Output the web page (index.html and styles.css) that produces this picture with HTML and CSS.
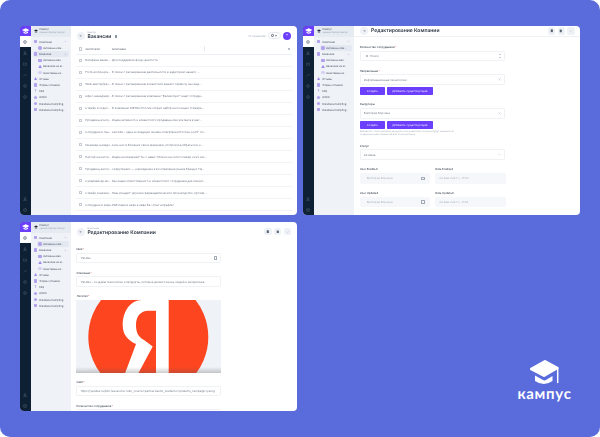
FILE: index.html
```html
<!DOCTYPE html>
<html lang="ru">
<head>
<meta charset="utf-8">
<title>Кампус</title>
<link rel="stylesheet" href="styles.css">
</head>
<body>
<svg class="defs" aria-hidden="true">
  <symbol id="i-globe" viewBox="0 0 10 10"><circle cx="5" cy="5" r="3.8" fill="none" stroke="currentColor"/><path d="M1.2 5h7.6M5 1.2c-2.4 2.4-2.4 5.2 0 7.6M5 1.2c2.4 2.4 2.4 5.2 0 7.6" fill="none" stroke="currentColor" stroke-width=".7"/></symbol>
  <symbol id="i-user" viewBox="0 0 10 10"><circle cx="5" cy="3.4" r="2" fill="none" stroke="currentColor"/><path d="M1.5 9c0-4 7-4 7 0z" fill="none" stroke="currentColor"/></symbol>
  <symbol id="i-folder" viewBox="0 0 10 10"><path d="M1 2.2h3l1 1.2h4v4.6H1z" fill="none" stroke="currentColor"/></symbol>
  <symbol id="i-chart" viewBox="0 0 10 10"><path d="M1 8l3-3 2 1.5L9 2" fill="none" stroke="currentColor"/></symbol>
  <symbol id="i-gear" viewBox="0 0 10 10"><circle cx="5" cy="5" r="3.6" fill="none" stroke="currentColor"/><circle cx="5" cy="5" r="1.2" fill="currentColor"/></symbol>
  <symbol id="i-box" viewBox="0 0 10 10"><rect x="1.5" y="1.5" width="7" height="7" rx="1.5" fill="none" stroke="currentColor"/><path d="M1.5 5h7" stroke="currentColor"/></symbol>
  <symbol id="i-back" viewBox="0 0 10 10"><path d="M7.5 5h-5M4.5 3L2.5 5l2 2" fill="none" stroke="currentColor"/></symbol>
  <symbol id="i-chev" viewBox="0 0 10 10"><path d="M2 3.5L5 6.5l3-3" fill="none" stroke="currentColor"/></symbol>
  <symbol id="i-x" viewBox="0 0 10 10"><path d="M2 2l6 6M8 2l-6 6" stroke="currentColor" stroke-width="1.6"/></symbol>
  <symbol id="i-cap" viewBox="0 0 10 10"><path d="M5 1.5L10 4 5 6.5 0 4zM2 6v2l3 1 3-1V6L5 7.5z" fill="currentColor"/></symbol>
  <symbol id="i-check" viewBox="0 0 10 10"><path d="M2 5.2l2 2 4-4.4" fill="none" stroke="currentColor"/></symbol>
  <symbol id="i-trash" viewBox="0 0 10 10"><path d="M2.5 2.5h5V9h-5zM1.5 2h7M4 1h2" fill="currentColor" stroke="currentColor" stroke-width=".7"/></symbol>
  <symbol id="i-copy" viewBox="0 0 10 10"><rect x="2" y="1" width="6" height="8" rx="1" fill="currentColor"/></symbol>
</svg>

<main class="desk">

  <!-- Окно 1: список вакансий -->
  <section class="window">
    <div class="rail">
      <div class="rail-logo"><svg class="rail-logo-svg" viewBox="0 0 10 10"><use href="#i-cap"/></svg></div>
      <div class="rail-item rail-active"><svg class="rail-ico"><use href="#i-globe"/></svg></div>
      <div class="rail-item"><svg class="rail-ico"><use href="#i-user"/></svg></div>
      <div class="rail-item"><svg class="rail-ico"><use href="#i-folder"/></svg></div>
      <div class="rail-item"><svg class="rail-ico"><use href="#i-chart"/></svg></div>
      <div class="rail-item"><svg class="rail-ico"><use href="#i-gear"/></svg></div>
      <div class="rail-item"><svg class="rail-ico"><use href="#i-gear"/></svg></div>
      <div class="rail-item rail-push"><svg class="rail-ico"><use href="#i-user"/></svg></div>
      <div class="rail-item"><svg class="rail-ico"><use href="#i-box"/></svg></div>
    </div>
    <aside class="nav">
      <div class="nav-head"><svg class="nav-head-ico"><use href="#i-cap"/></svg><div><div class="nav-head-title">Кампус</div><div class="nav-head-sub">Администратор Кампус</div></div></div>
      <div class="nav-list">
        <div class="nav-item"><i class="dot sq"></i><span>Компании</span><svg class="nav-chev"><use href="#i-chev"/></svg></div>
        <div class="nav-item child"><i class="dot round"></i><span>Активные ком...</span></div>
        <div class="nav-item selected"><i class="dot sq"></i><span>Вакансии</span><svg class="nav-chev"><use href="#i-chev"/></svg></div>
        <div class="nav-item child"><i class="dot sq"></i><span>Активные вак...</span></div>
        <div class="nav-item child"><i class="dot tri"></i><span>Вакансии на м...</span></div>
        <div class="nav-item child"><i class="dot round pale"></i><span>Неактивные в...</span></div>
        <div class="nav-item"><i class="dot tri"></i><span>Отзывы</span></div>
        <div class="nav-item"><i class="dot sq"></i><span>Формы отзывов</span></div>
        <div class="nav-item"><b class="dot-q">?</b><span>FAQ</span></div>
        <div class="nav-item"><i class="dot round"></i><span>Admin</span></div>
        <div class="nav-item"><i class="dot round"></i><span>Database Kampfing</span></div>
        <div class="nav-item"><i class="dot sq"></i><span>Database Kampfing...</span></div>
      </div>
    </aside>
    <div class="main">
      <header class="head">
        <span class="round-btn"><svg class="btn-ico"><use href="#i-back"/></svg></span>
        <div class="head-text"><div class="crumb">Кампус</div><h1 class="title">Вакансии</h1></div>
        <span class="bookmark"></span>
        <span class="count">27 элементов</span>
        <span class="pill"><i class="pill-search"></i><i class="pill-filter"></i></span>
        <span class="plus">+</span>
      </header>
      <div class="table">
        <div class="row row-head"><i class="check"></i><span class="c-name">Заголовок</span><span class="c-desc">Описание</span><i class="col-sep"></i><i class="col-tool"></i></div>
        <div class="row"><i class="check"></i><span class="c-name">Ветераны вакан...</span><span class="c-desc">Для поддержки фонд занятости</span></div>
        <div class="row"><i class="check"></i><span class="c-name">Front-end разра...</span><span class="c-desc">В связи с расширением деятельности в аудиторию нашего ...</span></div>
        <div class="row"><i class="check"></i><span class="c-name">Web-мастер/раз...</span><span class="c-desc">В связи с расширением клиентской вашего сервиса, мы ище...</span></div>
        <div class="row"><i class="check"></i><span class="c-name">Офис-менеджер...</span><span class="c-desc">В связи с расширением компании "Великолукс" ищет сотрудн...</span></div>
        <div class="row"><i class="check"></i><span class="c-name">Стажёр в отдел ...</span><span class="c-desc">В компанию METRO Россия открыт набор на позицию стажера ...</span></div>
        <div class="row"><i class="check"></i><span class="c-name">Продавец-консу...</span><span class="c-desc">Ищем активного и клиентского продавца-консультанта в маг...</span></div>
        <div class="row"><i class="check"></i><span class="c-name">Сотрудник в пун...</span><span class="c-desc">Lamoda – одна из ведущих онлайн-платформ в России и СНГ по...</span></div>
        <div class="row"><i class="check"></i><span class="c-name">Инженер-наладч...</span><span class="c-desc">Сеть нас в ближних связи механики, которой разобраться в н...</span></div>
        <div class="row"><i class="check"></i><span class="c-name">Кассир на кассе...</span><span class="c-desc">Ищем на пекарней! Ты с нами? Можно на сети! Стажер 2023 ать...</span></div>
        <div class="row"><i class="check"></i><span class="c-name">Продавец-касси...</span><span class="c-desc">«Скрупнеки» — учреждение в возглавлении рынка бренд в ТЦ...</span></div>
        <div class="row"><i class="check"></i><span class="c-name">Супервайзер мо...</span><span class="c-desc">Мы ищем ответственного и клиентского сотрудника для клиент...</span></div>
        <div class="row"><i class="check"></i><span class="c-name">Стажёр в межка...</span><span class="c-desc">Наш концерт: крупное фармацевтическое производство, против...</span></div>
        <div class="row"><i class="check"></i><span class="c-name">Сотрудник в кафе...</span><span class="c-desc">Работаем в кафе в кафе без опыт штрафов!</span></div>
      </div>
    </div>
  </section>

  <!-- Окно 2: редактирование компании -->
  <section class="window">
    <div class="rail">
      <div class="rail-logo"><svg class="rail-logo-svg" viewBox="0 0 10 10"><use href="#i-cap"/></svg></div>
      <div class="rail-item rail-active"><svg class="rail-ico"><use href="#i-globe"/></svg></div>
      <div class="rail-item"><svg class="rail-ico"><use href="#i-user"/></svg></div>
      <div class="rail-item"><svg class="rail-ico"><use href="#i-folder"/></svg></div>
      <div class="rail-item"><svg class="rail-ico"><use href="#i-chart"/></svg></div>
      <div class="rail-item"><svg class="rail-ico"><use href="#i-gear"/></svg></div>
      <div class="rail-item"><svg class="rail-ico"><use href="#i-gear"/></svg></div>
      <div class="rail-item rail-push"><svg class="rail-ico"><use href="#i-user"/></svg></div>
      <div class="rail-item"><svg class="rail-ico"><use href="#i-box"/></svg></div>
    </div>
    <aside class="nav">
      <div class="nav-head"><svg class="nav-head-ico"><use href="#i-cap"/></svg><div><div class="nav-head-title">Кампус</div><div class="nav-head-sub">Администратор Кампус</div></div></div>
      <div class="nav-list">
        <div class="nav-item"><i class="dot sq"></i><span>Компании</span><svg class="nav-chev"><use href="#i-chev"/></svg></div>
        <div class="nav-item child selected-child"><i class="dot round"></i><span>Активные ком...</span></div>
        <div class="nav-item"><i class="dot sq"></i><span>Вакансии</span><svg class="nav-chev"><use href="#i-chev"/></svg></div>
        <div class="nav-item child"><i class="dot sq"></i><span>Активные вак...</span></div>
        <div class="nav-item child"><i class="dot tri"></i><span>Вакансии на м...</span></div>
        <div class="nav-item child"><i class="dot round pale"></i><span>Неактивные в...</span></div>
        <div class="nav-item"><i class="dot tri"></i><span>Отзывы</span></div>
        <div class="nav-item"><i class="dot sq"></i><span>Формы отзывов</span></div>
        <div class="nav-item"><b class="dot-q">?</b><span>FAQ</span></div>
        <div class="nav-item"><i class="dot round"></i><span>Admin</span></div>
        <div class="nav-item"><i class="dot round"></i><span>Database Kampfing</span></div>
        <div class="nav-item"><i class="dot sq"></i><span>Database Kampfing...</span></div>
      </div>
    </aside>
    <div class="main">
      <header class="head head-flat">
        <span class="round-btn"><svg class="btn-ico"><use href="#i-back"/></svg></span>
        <h1 class="title">Редактирование Компании</h1>
        <span class="tools">
          <span class="tool"><svg class="btn-ico dark"><use href="#i-copy"/></svg></span>
          <span class="tool"><svg class="btn-ico dark"><use href="#i-trash"/></svg></span>
          <span class="tool tool-pale"><svg class="btn-ico"><use href="#i-check"/></svg></span>
        </span>
      </header>
      <div class="form form-flat">
        <div class="field"><label class="label">Количество сотрудников<em>*</em></label><div class="input"><i class="input-lead"></i><span>15000</span><i class="spin"></i></div></div>
        <div class="field field-tight"><label class="label">Направление<em>*</em></label><div class="input"><span>Информационные технологии</span><svg class="input-x"><use href="#i-x"/></svg></div></div>
        <div class="actions"><span class="btn btn-s">Создать</span><span class="btn btn-l">Добавить существующий</span></div>
        <div class="field field-tight"><label class="label">Рекрутёры</label><div class="input"><span>Виктория Борзина</span><svg class="input-x"><use href="#i-x"/></svg></div></div>
        <div class="actions"><span class="btn btn-s">Создать</span><span class="btn btn-l">Добавить существующий</span></div>
        <p class="help">Добавьте к этой компании аккаунты пользователей, которые будут заниматься<br>созданием новых вакансий для этой компании.</p>
        <div class="field"><label class="label">Статус</label><div class="input"><span>Активна</span><svg class="input-chev"><use href="#i-chev"/></svg></div></div>
        <div class="pair">
          <div class="field"><label class="label">User Enabled</label><div class="input input-off"><span class="off-user">Виктория Борзина</span><i class="cal"></i></div></div>
          <div class="field"><label class="label">Date Enabled</label><div class="input input-off"><span>24 мая 2023 г., 17:58</span></div></div>
        </div>
        <div class="pair">
          <div class="field"><label class="label">User Updated</label><div class="input input-off"><span class="off-user">Виктория Борзина</span><i class="cal"></i></div></div>
          <div class="field"><label class="label">Date Updated</label><div class="input input-off"><span>24 мая 2023 г., 11:58</span></div></div>
        </div>
      </div>
    </div>
  </section>

  <!-- Окно 3: редактирование компании, логотип -->
  <section class="window">
    <div class="rail">
      <div class="rail-logo"><svg class="rail-logo-svg" viewBox="0 0 10 10"><use href="#i-cap"/></svg></div>
      <div class="rail-item rail-active"><svg class="rail-ico"><use href="#i-globe"/></svg></div>
      <div class="rail-item"><svg class="rail-ico"><use href="#i-user"/></svg></div>
      <div class="rail-item"><svg class="rail-ico"><use href="#i-folder"/></svg></div>
      <div class="rail-item"><svg class="rail-ico"><use href="#i-chart"/></svg></div>
      <div class="rail-item"><svg class="rail-ico"><use href="#i-gear"/></svg></div>
      <div class="rail-item"><svg class="rail-ico"><use href="#i-gear"/></svg></div>
      <div class="rail-item rail-push"><svg class="rail-ico"><use href="#i-user"/></svg></div>
      <div class="rail-item"><svg class="rail-ico"><use href="#i-box"/></svg></div>
    </div>
    <aside class="nav">
      <div class="nav-head"><svg class="nav-head-ico"><use href="#i-cap"/></svg><div><div class="nav-head-title">Кампус</div><div class="nav-head-sub">Администратор Кампус</div></div></div>
      <div class="nav-list">
        <div class="nav-item"><i class="dot sq"></i><span>Компании</span><svg class="nav-chev"><use href="#i-chev"/></svg></div>
        <div class="nav-item child selected-child"><i class="dot round"></i><span>Активные ком...</span></div>
        <div class="nav-item"><i class="dot sq"></i><span>Вакансии</span><svg class="nav-chev"><use href="#i-chev"/></svg></div>
        <div class="nav-item child"><i class="dot sq"></i><span>Активные вак...</span></div>
        <div class="nav-item child"><i class="dot tri"></i><span>Вакансии на м...</span></div>
        <div class="nav-item child"><i class="dot round pale"></i><span>Неактивные в...</span></div>
        <div class="nav-item"><i class="dot tri"></i><span>Отзывы</span></div>
        <div class="nav-item"><i class="dot sq"></i><span>Формы отзывов</span></div>
        <div class="nav-item"><b class="dot-q">?</b><span>FAQ</span></div>
        <div class="nav-item"><i class="dot round"></i><span>Admin</span></div>
        <div class="nav-item"><i class="dot round"></i><span>Database Kampfing</span></div>
        <div class="nav-item"><i class="dot sq"></i><span>Database Kampfing...</span></div>
      </div>
    </aside>
    <div class="main">
      <header class="head">
        <span class="round-btn"><svg class="btn-ico"><use href="#i-back"/></svg></span>
        <div class="head-text"><div class="crumb">Компании</div><h1 class="title">Редактирование Компании</h1></div>
        <span class="tools">
          <span class="tool"><svg class="btn-ico dark"><use href="#i-copy"/></svg></span>
          <span class="tool"><svg class="btn-ico dark"><use href="#i-trash"/></svg></span>
          <span class="tool tool-pale"><svg class="btn-ico"><use href="#i-check"/></svg></span>
        </span>
      </header>
      <div class="form form-logo">
        <div class="field"><label class="label">Имя<em>*</em></label><div class="input"><span>Yandex</span><i class="cal cal-end"></i></div></div>
        <div class="field"><label class="label">Описание<em>*</em></label><div class="input"><span>Yandex – создаём технологии и продукты, которые делают жизнь людей и интереснее.</span></div></div>
        <div class="field field-logo"><label class="label">Логотип<em>*</em></label>
          <div class="logo-box">
            <svg class="logo-art" viewBox="0 0 144.5 73.4" aria-hidden="true">
              <circle cx="72.3" cy="37" r="60" fill="#fd4520"/>
              <path d="M92.7 0H66C54 0 46.7 12 46.7 25C46.7 34 51 40 60 44L49 73.4H62.3L76.7 46.4L68 40C62 37 60 32 60 25C60 16 65 10.7 72 10.7H80V73.4H92.7Z" fill="#fff"/>
            </svg>
            <div class="logo-cap">img 1280</div>
          </div>
        </div>
        <div class="field"><label class="label">Сайт<em>*</em></label><div class="input"><span>https://yandex.ru/jobs/vacancies?utm_source=partners&amp;utm_medium=cpm&amp;utm_campaign=yaorg</span></div></div>
        <div class="field"><label class="label">Количество сотрудников<em>*</em></label><div class="input"></div></div>
      </div>
    </div>
  </section>

  <!-- Логотип Кампус -->
  <div class="brand">
    <svg class="brand-cap" viewBox="0 0 30 26" aria-hidden="true">
      <path d="M1.5 9L15 1.5L27 8L14 15.5Z" fill="#fff" stroke="#fff" stroke-width="3" stroke-linejoin="round"/>
      <path d="M27.7 8V22.5" stroke="#fff" stroke-width="1.5" stroke-linecap="round"/>
      <path d="M5 15.5L13 20Q14.5 20.8 16 20L22.5 16V21Q14 27 5 21Z" fill="#fff"/>
    </svg>
    <div class="brand-name">кампус</div>
  </div>
</main>
</body>
</html>
```

FILE: styles.css
```css
* { box-sizing: border-box; margin: 0; padding: 0; }
html, body { width: 600px; height: 437px; overflow: hidden; background: #fff; }
body { font-family: "Inter", "Liberation Sans", sans-serif; text-rendering: geometricPrecision; }
.defs { width: 0; height: 0; display: block; }

.desk {
  width: 600px;
  height: 437px;
  background: #5a6bdc;
  border-radius: 10px;
  padding: 26px 20px;
  display: grid;
  grid-template-columns: 277px 277px;
  grid-template-rows: 189px 189px;
  column-gap: 6px;
  row-gap: 7px;
}

.window {
  display: flex;
  background: #fff;
  border-radius: 4px;
  overflow: hidden;
  filter: blur(.3px);
  color: #3c4555;
  font-size: 2.9px;
}

/* Rail */
.rail {
  width: 10.7px;
  flex: none;
  background: #0e2033;
  display: flex;
  flex-direction: column;
}
.rail-logo { height: 10px; background: #6b3ffb; color: #fff; display: flex; align-items: center; justify-content: center; }
.rail-logo-svg { width: 7.5px; height: 7.5px; }
.rail-item { height: 11px; flex: none; display: flex; align-items: center; justify-content: center; color: #5d6d7e; }
.rail-active { background: #fff; color: #55606e; }
.rail-push { margin-top: auto; }
.rail-ico { width: 4px; height: 4px; }

/* Nav */
.nav { width: 40.3px; flex: none; background: #eff2f7; }
.nav-head { height: 10.7px; background: #e6ebf2; display: flex; align-items: center; gap: 1.5px; padding-left: 3px; }
.nav-head-ico { width: 4px; height: 4px; color: #1b2533; flex: none; }
.nav-head-title { font-size: 2.7px; line-height: 3.3px; color: #4a5362; }
.nav-head-sub { font-size: 2.2px; line-height: 3px; color: #9aa3b1; white-space: nowrap; }
.nav-list { padding-top: 1.9px; }
.nav-item {
  height: 6.2px;
  display: flex;
  align-items: center;
  gap: 2px;
  padding-left: 3.2px;
  margin-right: 2.3px;
  font-size: 2.6px;
  color: #4c5565;
  white-space: nowrap;
  border-radius: 1.5px;
}
.nav-item.child { padding-left: 7.7px; gap: 1.4px; }
.selected { margin-left: 2.2px; padding-left: 1px; background: #e3e8f1; }
.selected-child { margin-left: 6.3px; padding-left: 1.4px !important; background: #e3e8f1; }
.nav-chev { width: 3px; height: 3px; margin-left: auto; margin-right: 1.5px; color: #8b7ce0; }
.dot { width: 3.4px; height: 3.4px; flex: none; background: #b3a3ee; display: block; }
.sq { border-radius: .8px; }
.round { border-radius: 50%; }
.pale { background: #d7d0f4; }
.tri { clip-path: polygon(50% 0, 100% 100%, 0 100%); background: #9c86ec; }
.dot-q { width: 3.4px; flex: none; text-align: center; font-size: 3.6px; font-weight: 500; color: #8d76e8; }

/* Main */
.main { flex: 1; min-width: 0; display: flex; flex-direction: column; overflow: hidden; }
.head { height: 18px; flex: none; display: flex; align-items: center; padding: 1px 6px 0; gap: 2.4px; }
.head-flat { height: 11px; padding: 0 5.5px 0 6.5px; border-bottom: .6px solid #eef0f4; gap: 2.6px; }
.round-btn { width: 8px; height: 8px; flex: none; border-radius: 50%; background: #eef1f6; display: flex; align-items: center; justify-content: center; color: #3a4454; }
.btn-ico { width: 3.6px; height: 3.6px; display: block; }
.btn-ico.dark { color: #5b6472; }
.crumb { font-size: 2.4px; line-height: 3px; color: #9aa3b1; }
.title { font-size: 5px; line-height: 6px; font-weight: 600; color: #2a3342; white-space: nowrap; }
.bookmark { width: 2.6px; height: 3px; border: .5px solid #8d95a3; margin-left: 1px; margin-top: 2px; }
.count { margin-left: auto; font-size: 2.6px; color: #a5adba; white-space: nowrap; }
.pill { width: 12.5px; height: 7px; border: .5px solid #e6e9ef; border-radius: 3.5px; display: flex; align-items: center; justify-content: center; gap: 1.4px; }
.pill-search { width: 2.6px; height: 2.6px; border: .6px solid #59606e; border-radius: 50%; }
.pill-filter { width: 0; height: 0; border: 1.3px solid transparent; border-top: 2px solid #7d8492; border-bottom: 0; }
.plus { width: 8px; height: 8px; border-radius: 50%; background: #6b3ffb; color: #dcd3ff; font-size: 4.5px; line-height: 8px; text-align: center; }
.tools { margin-left: auto; display: flex; gap: 2.2px; }
.tool { width: 7.4px; height: 7.4px; border-radius: 2.6px; background: #eef1f6; display: flex; align-items: center; justify-content: center; }
.tool-pale { color: #a9b2c4; }

/* Table */
.table { margin: 0 5.5px; }
.row {
  height: 12.05px;
  display: flex;
  align-items: center;
  border-bottom: .5px solid #f1f3f6;
  white-space: nowrap;
  color: #6d7584;
}
.row-head { height: 10.7px; color: #4c5565; border-bottom-color: #eceff3; }
.check { width: 3.4px; height: 3.4px; flex: none; margin-left: 2.5px; border: .6px solid #c4cad4; border-radius: .6px; }
.c-name { width: 29.6px; padding-left: 2.9px; flex: none; overflow: hidden; }
.c-desc { width: 96px; flex: none; overflow: hidden; }
.col-sep { width: .5px; height: 5px; background: #e6e9ef; margin-left: -4px; }
.col-tool { width: 2px; height: 2px; background: #b7bdc9; margin-left: auto; margin-right: 1.5px; }

/* Forms */
.form { padding: 8px 0 0 5.7px; width: 151.5px; }
.form-logo { padding-top: 7px; padding-left: 5.5px; width: 150px; }
.field { margin-bottom: 7.3px; }
.field-tight { margin-bottom: 2px; }
.field-logo { margin-bottom: 7px; }
.label { display: block; height: 4px; line-height: 4px; margin-bottom: 1.7px; font-size: 2.8px; font-weight: 500; color: #3c4555; }
.label em { color: #e0604f; font-style: normal; }
.input {
  height: 10.7px;
  border: .6px solid #eff1f5;
  border-radius: 1.4px;
  display: flex;
  align-items: center;
  padding: 0 3.2px;
  color: #6f7785;
  white-space: nowrap;
  overflow: hidden;
  gap: 1.6px;
}
.input-off { background: #f5f7fa; color: #a9b1be; border-color: #f5f7fa; }
.off-user { padding-left: 2.8px; }
.input-lead { width: 2.6px; height: 2.6px; border: .5px solid #b9bfca; margin-left: 2px; }
.spin { width: 2px; height: 4px; margin-left: auto; border-top: .6px solid #c4cad4; border-bottom: .6px solid #c4cad4; }
.input-x { width: 3px; height: 3px; margin-left: auto; color: #a9b5d0; }
.input-chev { width: 3px; height: 3px; margin-left: auto; color: #8d95a3; }
.cal { width: 3.2px; height: 3.2px; margin-left: auto; margin-right: 1.4px; border: .5px solid #a2a9b6; border-radius: .5px; }
.cal-end { margin-right: 0; }
.actions { display: flex; gap: 1.8px; margin-bottom: 7.2px; }
.btn { height: 8.2px; line-height: 8.2px; text-align: center; background: #6b3ffb; color: #eae5ff; font-size: 2.8px; border-radius: .8px; white-space: nowrap; }
.btn-s { width: 25.4px; }
.btn-l { width: 46px; }
.help { font-size: 2.4px; line-height: 3.6px; color: #a5adba; margin-top: -6.4px; margin-bottom: 6.6px; white-space: nowrap; }
.pair { display: grid; grid-template-columns: 70.5px 70.5px; column-gap: 5px; }

/* Logo upload */
.logo-box { height: 73.4px; background: #eff2f7; position: relative; overflow: hidden; margin-top: -.4px; }
.logo-art { display: block; width: 144.5px; height: 73.4px; }
.logo-cap { position: absolute; left: 0; right: 0; bottom: 0; height: 6.4px; line-height: 6.4px; padding-left: 2px; font-size: 2.4px; color: #e8e8e8; background: linear-gradient(rgba(90, 90, 90, 0), rgba(90, 90, 90, .3)); }

/* Brand */
.brand { justify-self: end; align-self: end; margin: 0 5.5px 8px 0; width: 60px; display: flex; flex-direction: column; align-items: center; }
.brand-cap { width: 30px; height: 26px; display: block; margin-left: 1px; }
.brand-name { font-family: "Lato", "Inter", sans-serif; font-size: 15px; font-weight: 700; line-height: 18px; letter-spacing: .7px; color: #fff; margin-top: -1px; }
```
